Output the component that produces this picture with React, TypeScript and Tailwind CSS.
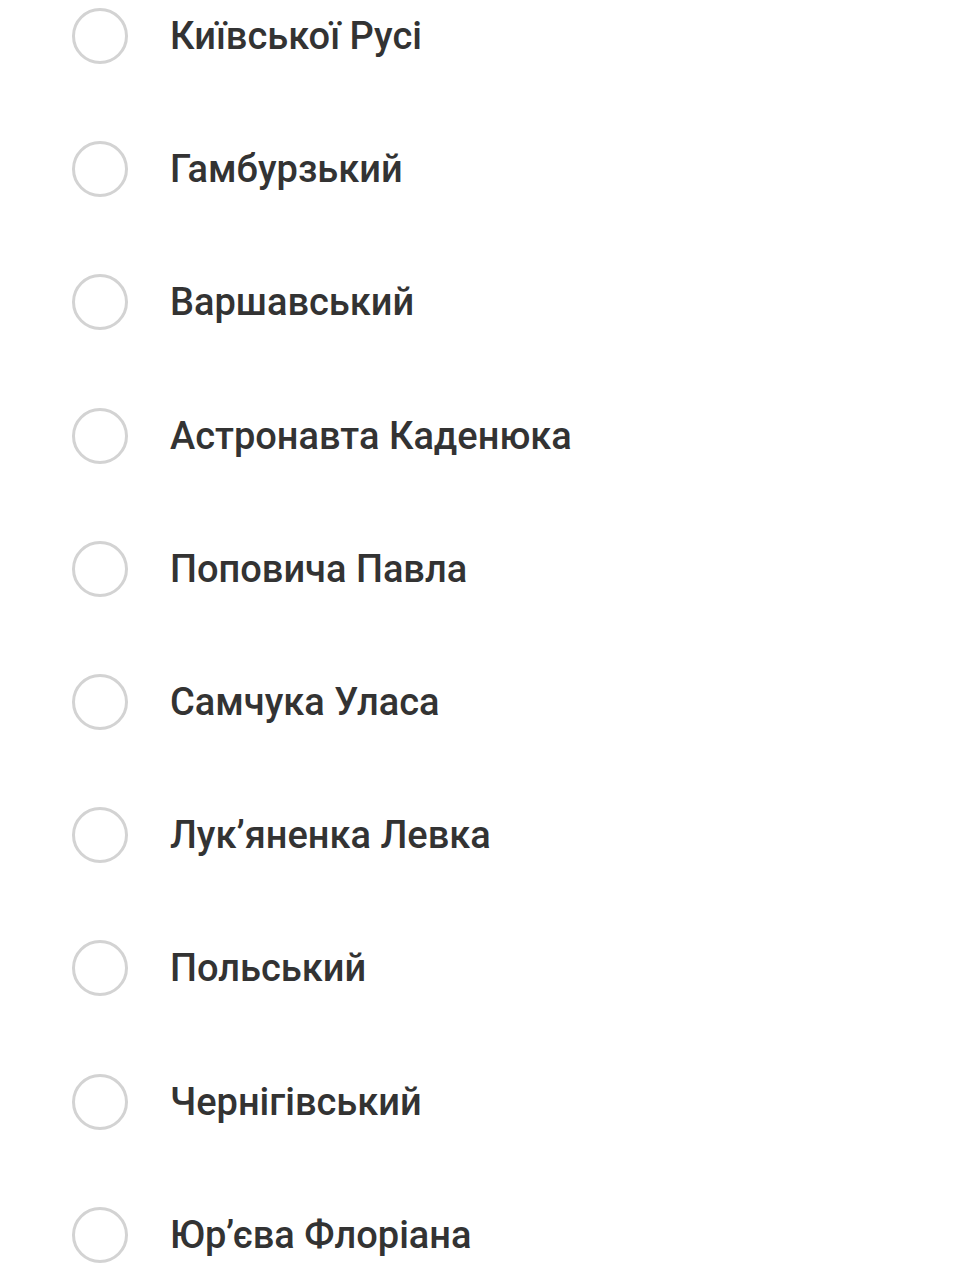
const streets = [
  "Київської Русі",
  "Гамбурзький",
  "Варшавський",
  "Астронавта Каденюка",
  "Поповича Павла",
  "Самчука Уласа",
  "Лук’яненка Левка",
  "Польський",
  "Чернігівський",
  "Юр’єва Флоріана",
];

export default function App() {
  return (
    <div className="min-h-[1280px] w-full bg-white overflow-hidden font-['Roboto',sans-serif]">
      <ul className="flex flex-col gap-[77.2px] pt-[8px] pl-[72px]">
        {streets.map((name) => (
          <li key={name} className="flex h-14 items-center gap-[42px]">
            <span className="h-14 w-14 shrink-0 rounded-full border-[3px] border-[#d3d3d3]" />
            <span className="text-[38px] leading-none font-medium text-[#333333]">
              {name}
            </span>
          </li>
        ))}
      </ul>
    </div>
  );
}
